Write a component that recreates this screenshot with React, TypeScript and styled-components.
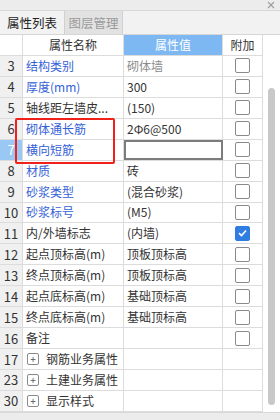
import React from 'react';
import styled, { createGlobalStyle } from 'styled-components';

const GlobalStyle = createGlobalStyle`
  html, body {
    margin: 0;
    padding: 0;
    background: #ffffff;
  }
  body {
    font-family: "Noto Sans CJK SC", "Noto Sans", sans-serif;
    font-size: 12px;
    color: #333333;
  }
`;

const Panel = styled.div`
  width: 280px;
  height: 420px;
  display: flex;
  flex-direction: column;
  background: #ffffff;
  position: relative;
  overflow: hidden;
`;

const TitleStrip = styled.div`
  height: 11px;
  background: #ececec;
  border-bottom: 1px solid #d8d8d8;
  display: flex;
  justify-content: flex-end;
  align-items: center;
  padding-right: 5px;
  box-sizing: border-box;
`;

const TabBar = styled.div`
  height: 24px;
  display: flex;
  background: #f2f2f2;
  border-bottom: 1px solid #d6d6d6;
  box-sizing: border-box;
`;

const Tab = styled.div<{ $active?: boolean }>`
  width: ${(p) => (p.$active ? '65px' : '58px')};
  display: flex;
  align-items: center;
  justify-content: center;
  font-size: 12.5px;
  color: ${(p) => (p.$active ? '#222222' : '#9a9a9a')};
  background: ${(p) => (p.$active ? '#f2f2f2' : '#e2e2e2')};
  border-right: 1px solid #d0d0d0;
  box-sizing: border-box;
`;

const Body = styled.div`
  display: flex;
  flex: 1;
  min-height: 0;
`;

const Grid = styled.div`
  width: 263px;
  display: flex;
  flex-direction: column;
`;

const Row = styled.div`
  display: grid;
  grid-template-columns: 23px 101px 99px 40px;
  height: 21px;
  border-bottom: 1px solid #dcdcdc;
  box-sizing: border-box;
`;

const Cell = styled.div<{ $align?: string; $bg?: string; $color?: string }>`
  display: flex;
  align-items: center;
  justify-content: ${(p) => p.$align || 'flex-start'};
  padding-left: ${(p) => (p.$align ? '0' : '3px')};
  background: ${(p) => p.$bg || 'transparent'};
  color: ${(p) => p.$color || '#333333'};
  border-right: 1px solid #dcdcdc;
  white-space: nowrap;
  overflow: hidden;
  box-sizing: border-box;
  line-height: 1;
`;

const NumCell = styled(Cell)<{ $selected?: boolean }>`
  justify-content: center;
  padding-left: 0;
  background: ${(p) => (p.$selected ? '#99c8f4' : '#f0f0f0')};
  color: ${(p) => (p.$selected ? '#ffffff' : '#333333')};
  font-size: 13px;
`;

const EditCell = styled.div`
  border: 2px solid #7c7c7c;
  box-sizing: border-box;
`;

const Check = styled.span<{ $checked?: boolean }>`
  width: 13px;
  height: 13px;
  border: 1px solid ${(p) => (p.$checked ? '#2f7de1' : '#8a8a8a')};
  border-radius: 2px;
  background: ${(p) => (p.$checked ? '#2f7de1' : '#ffffff')};
  display: flex;
  align-items: center;
  justify-content: center;
`;

const Expander = styled.span`
  width: 10px;
  height: 10px;
  border: 1px solid #8a8a8a;
  border-radius: 2px;
  display: inline-flex;
  align-items: center;
  justify-content: center;
  font-size: 10px;
  color: #555555;
  margin-right: 7px;
  margin-left: 1px;
`;

const ScrollTrack = styled.div`
  width: 17px;
  display: flex;
  justify-content: center;
  align-items: flex-start;
  padding-top: 53px;
  box-sizing: border-box;
`;

const Thumb = styled.div`
  width: 7px;
  height: 317px;
  background: #c8c8c8;
  border-radius: 4px;
`;

const Footer = styled.div`
  height: 7px;
  background: #ececec;
  border-top: 1px solid #d8d8d8;
`;

const Highlight = styled.div`
  position: absolute;
  left: 15px;
  top: 118px;
  width: 100px;
  height: 46px;
  border: 2px solid #f0201a;
  border-radius: 2px;
  box-sizing: border-box;
  pointer-events: none;
`;

type Item = {
  no: string;
  name: string;
  value?: string;
  blue?: boolean;
  grayValue?: boolean;
  checked?: boolean;
  group?: boolean;
  editing?: boolean;
};

const BLUE = '#3561d8';

const items: Item[] = [
  { no: '3', name: '结构类别', value: '砌体墙', blue: true, grayValue: true },
  { no: '4', name: '厚度(mm)', value: '300', blue: true },
  { no: '5', name: '轴线距左墙皮...', value: '(150)' },
  { no: '6', name: '砌体通长筋', value: '2Φ6@500', blue: true },
  { no: '7', name: '横向短筋', blue: true, editing: true },
  { no: '8', name: '材质', value: '砖', blue: true },
  { no: '9', name: '砂浆类型', value: '(混合砂浆)', blue: true },
  { no: '10', name: '砂浆标号', value: '(M5)', blue: true },
  { no: '11', name: '内/外墙标志', value: '(内墙)', checked: true },
  { no: '12', name: '起点顶标高(m)', value: '顶板顶标高' },
  { no: '13', name: '终点顶标高(m)', value: '顶板顶标高' },
  { no: '14', name: '起点底标高(m)', value: '基础顶标高' },
  { no: '15', name: '终点底标高(m)', value: '基础顶标高' },
  { no: '16', name: '备注' },
  { no: '17', name: '钢筋业务属性', group: true },
  { no: '23', name: '土建业务属性', group: true },
  { no: '30', name: '显示样式', group: true },
];

const CheckMark = () => (
  <svg width="9" height="8" viewBox="0 0 9 8">
    <path d="M1 4.2 L3.5 6.5 L8 1.5" stroke="#ffffff" strokeWidth="1.6" fill="none" />
  </svg>
);

const App: React.FC = () => {
  return (
    <Panel>
      <GlobalStyle />
      <TitleStrip>
        <svg width="8" height="8" viewBox="0 0 8 8">
          <path d="M1 1 L7 7 M7 1 L1 7" stroke="#a0a0a0" strokeWidth="1.2" />
        </svg>
      </TitleStrip>
      <TabBar>
        <Tab $active>属性列表</Tab>
        <Tab>图层管理</Tab>
      </TabBar>
      <Body>
        <Grid>
          <Row>
            <Cell $align="center" />
            <Cell $align="center">属性名称</Cell>
            <Cell $align="center" $bg="#7db8f3" $color="#ffffff">属性值</Cell>
            <Cell $align="center">附加</Cell>
          </Row>
          {items.map((it) => (
            <Row key={it.no}>
              <NumCell $selected={it.editing}>{it.no}</NumCell>
              <Cell $color={it.blue ? BLUE : '#333333'}>
                {it.group && <Expander>+</Expander>}
                {it.name}
              </Cell>
              {it.editing ? (
                <EditCell />
              ) : (
                <Cell $color={it.grayValue ? '#8c8c8c' : '#333333'}>{it.value}</Cell>
              )}
              <Cell $align="center">
                {!it.group && (
                  <Check $checked={it.checked}>{it.checked && <CheckMark />}</Check>
                )}
              </Cell>
            </Row>
          ))}
        </Grid>
        <ScrollTrack>
          <Thumb />
        </ScrollTrack>
      </Body>
      <Footer />
      <Highlight />
    </Panel>
  );
};

export default App;
